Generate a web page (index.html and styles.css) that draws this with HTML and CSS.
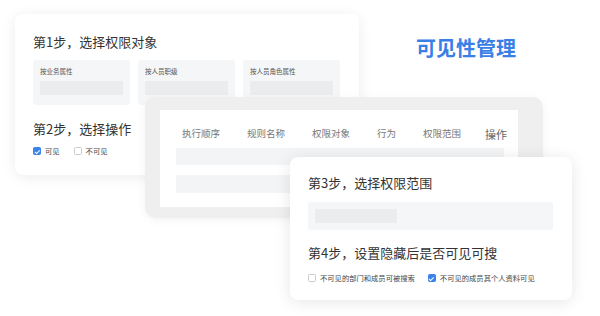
FILE: index.html
```html
<!DOCTYPE html>
<html>
<head>
    <meta charset="UTF-8">
    <title>可见性管理</title>
    <link rel="stylesheet" href="styles.css">
</head>
<body>
<div class="stage">
    <div class="card card-object">
        <h2 class="step-title">第1步，选择权限对象</h2>
        <div class="object-list">
            <div class="object-box">
                <span class="object-label">按业务属性</span>
                <div class="bar"></div>
            </div>
            <div class="object-box">
                <span class="object-label">按人员职级</span>
                <div class="bar"></div>
            </div>
            <div class="object-box">
                <span class="object-label">按人员角色属性</span>
                <div class="bar"></div>
            </div>
        </div>
        <h2 class="step-title step-gap">第2步，选择操作</h2>
        <div class="check-row">
            <label class="check"><span class="box checked"></span>可见</label>
            <label class="check"><span class="box"></span>不可见</label>
        </div>
    </div>

    <h1 class="page-title">可见性管理</h1>

    <div class="table-panel">
        <div class="table-inner">
            <div class="table-head">
                <span>执行顺序</span>
                <span>规则名称</span>
                <span>权限对象</span>
                <span>行为</span>
                <span>权限范围</span>
                <span class="head-op">操作</span>
            </div>
            <div class="table-row"></div>
            <div class="table-row row-two"></div>
        </div>
    </div>

    <div class="card card-range">
        <h2 class="step-title">第3步，选择权限范围</h2>
        <div class="range-box">
            <div class="range-bar"></div>
        </div>
        <h2 class="step-title step-four">第4步，设置隐藏后是否可见可搜</h2>
        <div class="check-row range-checks">
            <label class="check"><span class="box"></span>不可见的部门和成员可被搜索</label>
            <label class="check"><span class="box checked"></span>不可见的成员其个人资料可见</label>
        </div>
    </div>
</div>
</body>
</html>
```

FILE: styles.css
```css
body {
    margin: 0;
    padding: 0;
    background-color: #fff;
    font-family: "Noto Sans CJK SC", "Noto Sans", sans-serif;
    color: #333;
}

.stage {
    position: relative;
    width: 600px;
    height: 316px;
    overflow: hidden;
}

.card {
    position: absolute;
    box-sizing: border-box;
    background-color: #fff;
    border-radius: 8px;
    box-shadow: 0 2px 14px rgba(0, 0, 0, 0.08);
}

.step-title {
    margin: 0;
    font-size: 13px;
    font-weight: normal;
    line-height: 16px;
    color: #333;
    white-space: nowrap;
}

/* step 1 and 2 */
.card-object {
    left: 15px;
    top: 14px;
    width: 344px;
    height: 161px;
    padding: 20px 18px;
}

.object-list {
    display: flex;
    gap: 8px;
    margin-top: 10px;
}

.object-box {
    box-sizing: border-box;
    width: 97px;
    height: 45px;
    padding: 7px 7px 0;
    border-radius: 3px;
    background-color: #f5f6f7;
}

.object-label {
    display: block;
    font-size: 6.5px;
    line-height: 9px;
    color: #555;
}

.bar {
    height: 14px;
    margin-top: 5px;
    background-color: #ebecee;
    border-radius: 1px;
}

.step-gap {
    margin-top: 16px;
}

.check-row {
    display: flex;
    gap: 14px;
    margin-top: 9px;
}

.check {
    display: flex;
    align-items: center;
    gap: 4px;
    font-size: 7.3px;
    line-height: 10px;
    color: #444;
    white-space: nowrap;
}

.box {
    box-sizing: border-box;
    width: 8px;
    height: 8px;
    border: 1px solid #c9cbcf;
    border-radius: 1.5px;
    background-color: #fff;
    position: relative;
}

.box.checked {
    background-color: #3b82ea;
    border-color: #3b82ea;
}

.box.checked::after {
    content: "";
    position: absolute;
    left: 1.5px;
    top: 0.5px;
    width: 2px;
    height: 3.5px;
    border: solid #fff;
    border-width: 0 1px 1px 0;
    transform: rotate(45deg);
}

.page-title {
    position: absolute;
    left: 416px;
    top: 34px;
    margin: 0;
    font-size: 20px;
    line-height: 28px;
    font-weight: bold;
    color: #3a7fe6;
}

/* rule table */
.table-panel {
    position: absolute;
    left: 145px;
    top: 97px;
    width: 398px;
    height: 121px;
    box-sizing: border-box;
    padding: 13px 25px 11px 15px;
    background-color: #efefef;
    border-radius: 10px;
    box-shadow: 0 2px 10px rgba(0, 0, 0, 0.05);
}

.table-inner {
    height: 100%;
    box-sizing: border-box;
    padding: 17px 14px 0 16px;
    background-color: #fff;
}

.table-head {
    display: grid;
    grid-template-columns: 65px 65px 65px 46px 62px auto;
    padding-left: 6px;
    font-size: 9.5px;
    line-height: 12px;
    color: #777;
    white-space: nowrap;
}

.head-op {
    font-size: 11px;
    margin-top: 1px;
    color: #666;
}

.table-row {
    height: 17px;
    margin-top: 8px;
    background-color: #f3f4f5;
}

.row-two {
    height: 18px;
    margin-top: 10px;
}

/* step 3 and 4 */
.card-range {
    left: 290px;
    top: 157px;
    width: 282px;
    height: 143px;
    padding: 18px 19px 0 18px;
    box-shadow: 0 2px 16px rgba(0, 0, 0, 0.1);
}

.range-box {
    height: 28px;
    box-sizing: border-box;
    margin-top: 11px;
    padding: 7px;
    background-color: #f5f6f7;
    border-radius: 2px;
}

.range-bar {
    width: 82px;
    height: 14px;
    background-color: #ebecee;
}

.step-four {
    margin-top: 15px;
}

.range-checks {
    margin-top: 12px;
    gap: 13px;
}
```
